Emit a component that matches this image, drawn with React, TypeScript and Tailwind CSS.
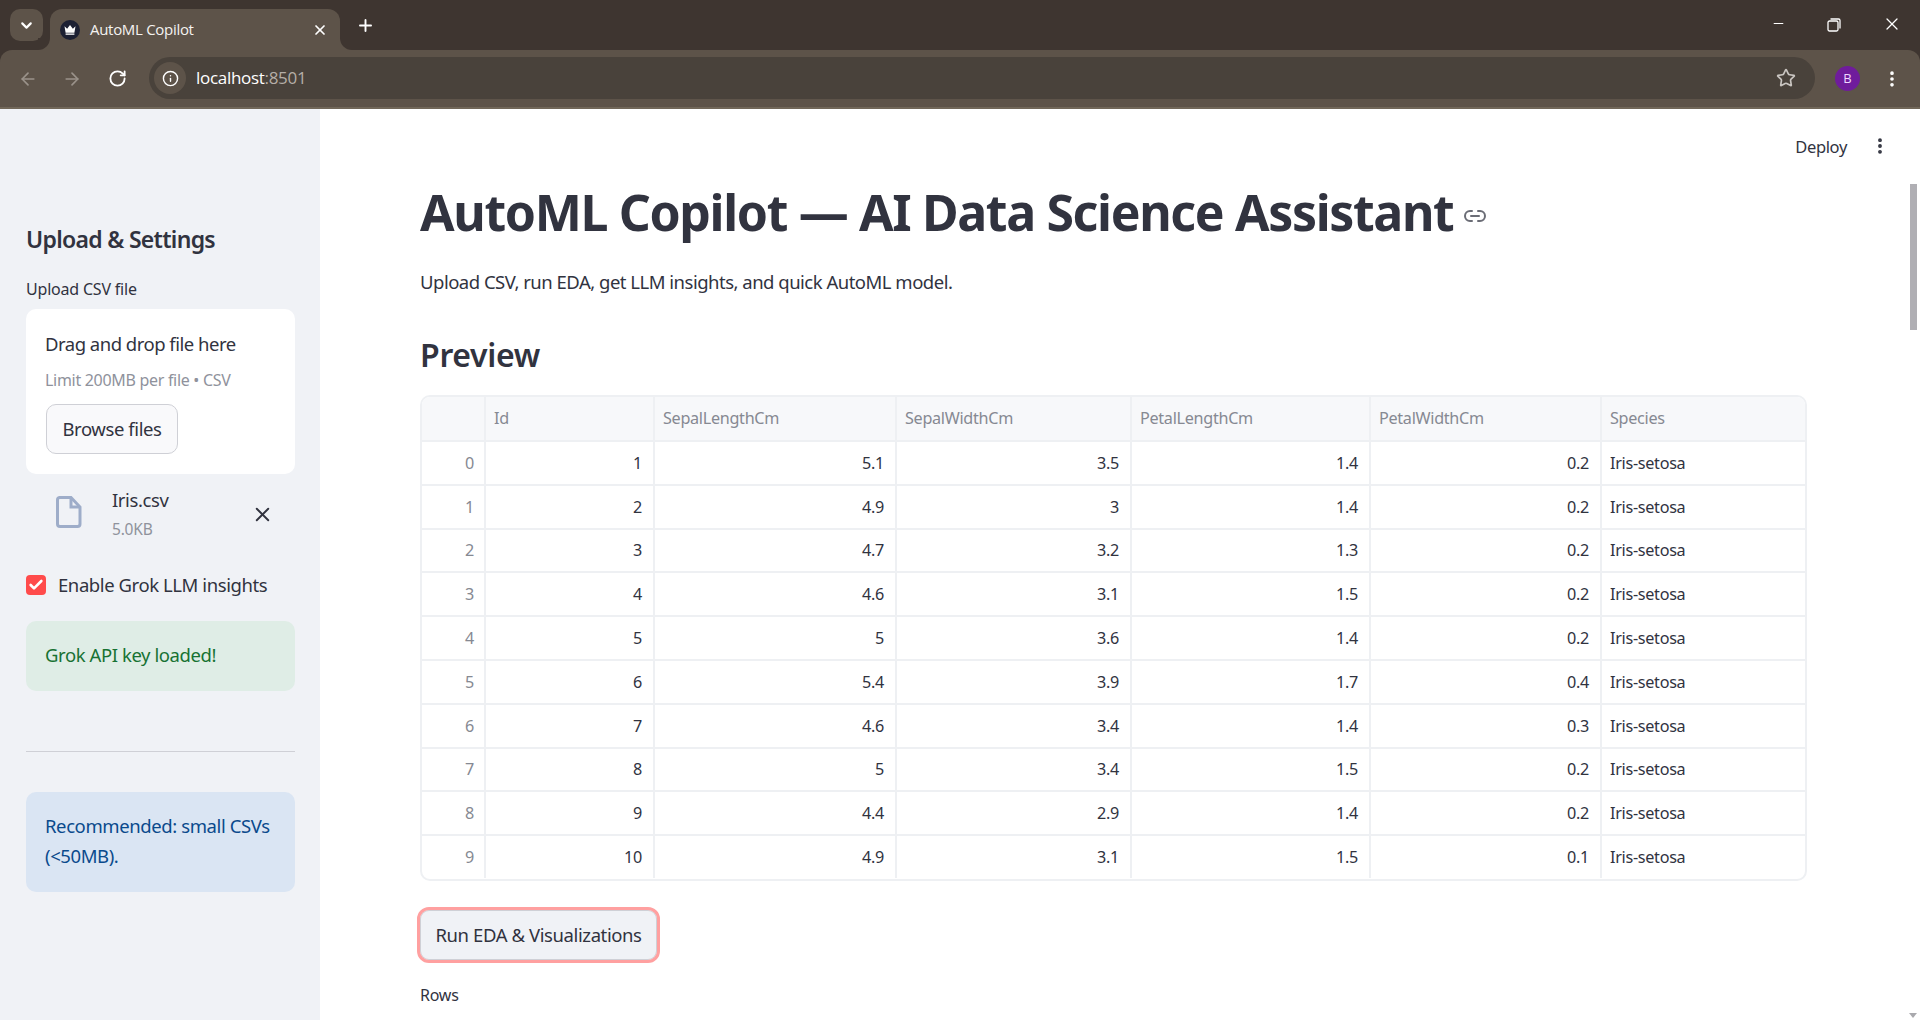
import { ArrowLeft, ArrowRight, RotateCw, Info, Star, X, Plus, ChevronDown, Minus, Link2, EllipsisVertical, Check } from "lucide-react";

const rows: [number, number, string, string, string, string][] = [
  [0, 1, "5.1", "3.5", "1.4", "0.2"],
  [1, 2, "4.9", "3", "1.4", "0.2"],
  [2, 3, "4.7", "3.2", "1.3", "0.2"],
  [3, 4, "4.6", "3.1", "1.5", "0.2"],
  [4, 5, "5", "3.6", "1.4", "0.2"],
  [5, 6, "5.4", "3.9", "1.7", "0.4"],
  [6, 7, "4.6", "3.4", "1.4", "0.3"],
  [7, 8, "5", "3.4", "1.5", "0.2"],
  [8, 9, "4.4", "2.9", "1.4", "0.2"],
  [9, 10, "4.9", "3.1", "1.5", "0.1"],
];

const gridCols = "grid grid-cols-[62px_169px_242px_235px_239px_231px_1fr]";
const numCell = "flex items-center justify-end pr-[11px] border-l-2 border-[#eef0f3]";

function Chrome() {
  return (
    <div className="h-[109px] flex flex-col bg-[#3e3530] font-['Open_Sans',sans-serif]">
      <div className="h-[50px] flex items-start">
        <div className="ml-[10px] mt-[9px] w-[33px] h-[32px] rounded-[10px] bg-[#5d5349] flex items-center justify-center">
          <ChevronDown size={17} strokeWidth={3} className="text-white" />
        </div>
        <div className="relative ml-[7px] mt-[9px] w-[290px] h-[41px] rounded-t-[12px] bg-[#5d5349] flex items-center pl-[10px] pr-[12px]">
          <div className="absolute -left-[12px] bottom-0 w-[12px] h-[12px] bg-[#5d5349]"><div className="w-full h-full rounded-br-[12px] bg-[#3e3530]" /></div>
          <div className="absolute -right-[12px] bottom-0 w-[12px] h-[12px] bg-[#5d5349]"><div className="w-full h-full rounded-bl-[12px] bg-[#3e3530]" /></div>
          <div className="w-[20px] h-[20px] rounded-full bg-[#1c2033] flex items-center justify-center">
            <svg width="14" height="11" viewBox="0 0 12 10"><path d="M1 2 L3.4 4.4 L6 0.8 L8.6 4.4 L11 2 L10 8 H2 Z" fill="#fff" /><rect x="2" y="8.6" width="8" height="1.2" fill="#fff" /></svg>
          </div>
          <span className="ml-[10px] text-[15px] text-[#f4f2f0] flex-1 tracking-[-0.3px]">AutoML Copilot</span>
          <X size={16} strokeWidth={2.6} className="text-white" />
        </div>
        <Plus size={19} strokeWidth={2.4} className="text-white ml-[16px] mt-[16px]" />
        <div className="flex-1" />
        <Minus size={15} strokeWidth={1.6} className="text-white mr-[41px] mt-[16px]" />
        <svg width="14" height="14" viewBox="0 0 14 14" className="mr-[41px] mt-[18px]" fill="none" stroke="#fff" strokeWidth="1.3"><rect x="1" y="3" width="10" height="10" rx="1.5" /><path d="M3.5 1 H11.5 A1.5 1.5 0 0 1 13 2.5 V10.5" /></svg>
        <X size={20} strokeWidth={1.5} className="text-white mr-[18px] mt-[14px]" />
      </div>
      <div className="h-[57px] bg-[#5d5349] rounded-t-[12px] flex items-center">
        <ArrowLeft size={20} strokeWidth={2} className="text-[#9a928a] ml-[18px]" />
        <ArrowRight size={20} strokeWidth={2} className="text-[#9a928a] ml-[24px]" />
        <RotateCw size={19} strokeWidth={2.3} className="text-white ml-[26px]" />
        <div className="ml-[22px] w-[1666px] h-[42px] rounded-full bg-[#49423b] flex items-center pl-[5px] -mt-[1px]">
          <div className="w-[32px] h-[32px] rounded-full bg-[#5d5349] flex items-center justify-center">
            <Info size={17} strokeWidth={2} className="text-white" />
          </div>
          <span className="ml-[10px] text-[17px] text-white tracking-[-0.3px]">localhost<span className="text-[#b5aea7]">:8501</span></span>
          <div className="flex-1" />
          <Star size={20} strokeWidth={2} className="text-[#c9c5c1] mr-[19px]" />
        </div>
        <div className="ml-[20px] w-[25px] h-[25px] rounded-full bg-[#6f1c9c] text-[#f0d8ff] text-[13px] flex items-center justify-center">B</div>
        <EllipsisVertical size={20} strokeWidth={2.4} className="text-white ml-[22px]" />
      </div>
      <div className="h-[2px] bg-[#716759]" />
    </div>
  );
}

function Sidebar() {
  return (
    <aside className="w-[320px] shrink-0 bg-[#f0f2f6] pl-[26px] pr-[25px] text-[#31333f] flex flex-col">
      <h2 className="mt-[114px] text-[23px] leading-[32px] font-semibold tracking-[-0.7px]">Upload &amp; Settings</h2>
      <div className="mt-[23px] text-[16px] leading-[22px] tracking-[-0.2px]">Upload CSV file</div>
      <div className="mt-[9px] h-[165px] rounded-[10px] bg-white pl-[20px] pt-[20px]">
        <div className="-ml-[1px] text-[18.5px] leading-[30px] tracking-[-0.5px]">Drag and drop file here</div>
        <div className="-ml-[1px] mt-[10px] text-[16px] leading-[22px] text-[#8f929c] tracking-[-0.3px]">Limit 200MB per file • CSV</div>
        <button className="mt-[13px] w-[132px] h-[50px] rounded-[10px] border border-[#cfd0d6] bg-[#f9f9fb] text-[18.5px] tracking-[-0.4px]">Browse files</button>
      </div>
      <div className="mt-[14px] flex items-start h-[69px]">
        <svg width="26" height="32" viewBox="0 0 26 32" className="ml-[30px] mt-[8px]" fill="none" stroke="#9eadc9" strokeWidth="3"><path d="M3.5 1.5 H15 L24 11 V28 A2.5 2.5 0 0 1 21.5 30.5 H4 A2.5 2.5 0 0 1 1.5 28 V4 A2.5 2.5 0 0 1 3.5 1.5 Z" /><path d="M15 2 V11 H24" /></svg>
        <div className="ml-[30px] flex-1 -mt-[2px]">
          <div className="text-[18.5px] leading-[28px] tracking-[-0.4px]">Iris.csv</div>
          <div className="mt-[2px] text-[15.5px] leading-[27px] text-[#8f929c] tracking-[-0.2px]">5.0KB</div>
        </div>
        <X size={23} strokeWidth={2} className="mr-[21px] mt-[15px]" />
      </div>
      <label className="mt-[16px] flex items-center h-[24px]">
        <span className="w-[20px] h-[20px] rounded-[4px] bg-[#ff4b4b] flex items-center justify-center">
          <Check size={16} strokeWidth={4} className="text-white" />
        </span>
        <span className="ml-[12px] text-[18.5px] tracking-[-0.42px]">Enable Grok LLM insights</span>
      </label>
      <div className="mt-[24px] h-[70px] rounded-[10px] bg-[#dfede6] flex items-center pl-[19px] pb-[2px] text-[18.5px] text-[#177233] tracking-[-0.42px]">Grok API key loaded!</div>
      <div className="mt-[60px] h-px bg-[#cfd0d6]" />
      <div className="mt-[40px] h-[100px] rounded-[10px] bg-[#dae5f3] pl-[19px] pr-[10px] pt-[19px] text-[18.5px] leading-[30px] text-[#0a4a8c] tracking-[-0.4px]">Recommended: small CSVs<br />(&lt;50MB).</div>
    </aside>
  );
}

function Table() {
  return (
    <div className="mt-[16px] w-[1387px] rounded-[10px] border-2 border-[#eef0f3] overflow-hidden pb-[1px] text-[16.2px] text-[#31333f] tracking-[-0.3px]">
      <div className={`${gridCols} h-[43px] bg-[#f7f8fa] text-[#868992]`}>
        <div />
        {["Id", "SepalLengthCm", "SepalWidthCm", "PetalLengthCm", "PetalWidthCm", "Species"].map((h) => (
          <div key={h} className="flex items-center pl-[8px] border-l-2 border-[#eef0f3]">{h}</div>
        ))}
      </div>
      {rows.map((r) => (
        <div key={r[0]} className={`${gridCols} h-[43.8px] border-t-2 border-[#eef0f3]`}>
          <div className="flex items-center justify-end pr-[10px] text-[#868992]">{r[0]}</div>
          <div className={numCell}>{r[1]}</div>
          <div className={numCell}>{r[2]}</div>
          <div className={numCell}>{r[3]}</div>
          <div className={numCell}>{r[4]}</div>
          <div className={numCell}>{r[5]}</div>
          <div className="flex items-center pl-[8px] border-l-2 border-[#eef0f3]">Iris-setosa</div>
        </div>
      ))}
    </div>
  );
}

function Main() {
  return (
    <main className="flex-1 relative pl-[100px] text-[#31333f] overflow-hidden">
      <div className="absolute top-[26px] right-[73px] text-[16.5px] leading-[24px] tracking-[-0.35px]">Deploy</div>
      <EllipsisVertical size={20} strokeWidth={2.6} className="absolute top-[27px] right-[30px]" />
      <div className="absolute top-[75px] right-[3px] w-[7px] h-[146px] bg-[#b0afb4]" />
      <div className="absolute bottom-[2px] right-[3px] w-0 h-0 border-l-[4px] border-r-[4px] border-t-[5px] border-l-transparent border-r-transparent border-t-[#a9a9ad]" />
      <div className="flex items-center mt-[68px] h-[70px]">
        <h1 className="text-[50px] leading-[70px] font-bold tracking-[-1.35px]">AutoML Copilot — AI Data Science Assistant</h1>
        <Link2 size={24} strokeWidth={2} className="ml-[10px] mt-[8px] text-[#6b6d76]" />
      </div>
      <p className="mt-[20px] text-[18.5px] leading-[30px] tracking-[-0.5px]">Upload CSV, run EDA, get LLM insights, and quick AutoML model.</p>
      <h2 className="mt-[34px] text-[32px] leading-[48px] font-semibold tracking-[-0.3px]">Preview</h2>
      <Table />
      <button className="mt-[26px] ml-[-3px] block w-[243px] h-[56px] rounded-[12px] border-[3.5px] border-[#ffa0a0] bg-[#f0f2f6] text-[18.5px] tracking-[-0.4px] shadow-[inset_0_0_0_1px_#cfd0d6]">Run EDA &amp; Visualizations</button>
      <div className="mt-[21px] text-[16px] leading-[22px] tracking-[-0.25px]">Rows</div>
    </main>
  );
}

export default function App() {
  return (
    <div className="w-[1920px] h-[1020px] overflow-hidden flex flex-col bg-white font-['Noto_Sans',sans-serif]">
      <Chrome />
      <div className="flex-1 flex min-h-0">
        <Sidebar />
        <Main />
      </div>
    </div>
  );
}
